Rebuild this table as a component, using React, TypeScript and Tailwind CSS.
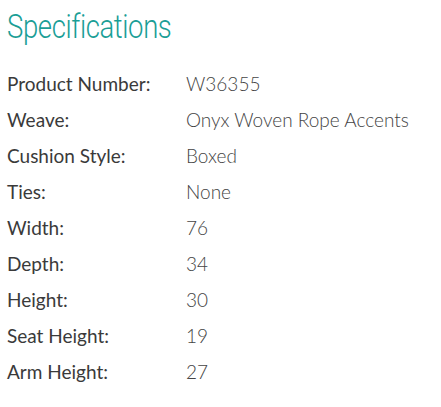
const specs: [string, string][] = [
  ["Product Number:", "W36355"],
  ["Weave:", "Onyx Woven Rope Accents"],
  ["Cushion Style:", "Boxed"],
  ["Ties:", "None"],
  ["Width:", "76"],
  ["Depth:", "34"],
  ["Height:", "30"],
  ["Seat Height:", "19"],
  ["Arm Height:", "27"],
];

export default function App() {
  return (
    <div className="w-[441px] h-[407px] bg-white px-[7px] pt-[6px]">
      {/* Heading */}
      <h2 className="origin-left scale-x-[0.81] whitespace-nowrap font-['Roboto',sans-serif] font-light text-[34px] leading-[40px] tracking-[-0.5px] text-[#1a9e96]">
        Specifications
      </h2>

      {/* Spec rows */}
      <div className="mt-[20px] flex flex-col">
        {specs.map(([label, value]) => (
          <div key={label} className="flex h-[36px] items-center">
            <span className="w-[179px] shrink-0 font-['Lato',sans-serif] text-[19px] text-[#3a3a3a]">
              {label}
            </span>
            <span className="font-['Lato',sans-serif] font-light text-[19px] text-[#444444]">
              {value}
            </span>
          </div>
        ))}
      </div>
    </div>
  );
}
